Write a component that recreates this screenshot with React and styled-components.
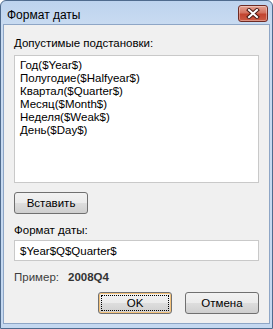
import styled, { createGlobalStyle } from "styled-components";

const Global = createGlobalStyle`
  html, body {
    margin: 0;
    padding: 0;
    background: #ffffff;
  }
  body {
    font-family: "Liberation Sans", Arial, sans-serif;
  }
`;

const Window = styled.div`
  width: 273px;
  height: 329px;
  box-sizing: border-box;
  display: flex;
  flex-direction: column;
  border: 1px solid #4f6b8e;
  border-radius: 6px 6px 0 0;
  background: linear-gradient(#bdd3ee 0px, #c9dbf1 24px, #c4d8f0 100%);
  overflow: hidden;
`;

const TitleBar = styled.div`
  height: 23px;
  display: flex;
  align-items: center;
  padding: 0 4px 0 6px;
  flex-shrink: 0;
`;

const Title = styled.div`
  font-size: 12px;
  color: #000;
  padding-top: 4px;
`;

const CloseButton = styled.div`
  margin-left: auto;
  margin-top: 2px;
  width: 30px;
  height: 17px;
  box-sizing: border-box;
  border: 1px solid #6e2b24;
  border-radius: 3px;
  background: linear-gradient(#e4a393 0%, #d4725f 45%, #c2442f 55%, #cc5b44 100%);
  display: flex;
  align-items: center;
  justify-content: center;
  box-shadow: inset 0 0 0 1px rgba(255, 255, 255, 0.35);
`;

const Client = styled.div`
  flex: 1;
  margin: 0 2px 4px 2px;
  background: #f0f0f0;
  border: 1px solid #8ea6c6;
  padding: 11px 10px 0 10px;
  display: flex;
  flex-direction: column;
  font-size: 11.5px;
  color: #000;
`;

const Label = styled.div`
  line-height: 15px;
  margin-top: ${(p) => p.$top || 0}px;
`;

const ListBox = styled.div`
  margin-top: 4px;
  height: 128px;
  box-sizing: border-box;
  background: #fff;
  border: 1px solid #c9c9c9;
  padding: 3px 5px;
`;

const ListItem = styled.div`
  line-height: 13px;
`;

const Button = styled.div`
  width: 74px;
  height: 22px;
  box-sizing: border-box;
  border: 1px solid #707070;
  border-radius: 3px;
  background: linear-gradient(#f2f2f2 0%, #ebebeb 50%, #dddddd 51%, #cfcfcf 100%);
  display: flex;
  align-items: center;
  justify-content: center;
  position: relative;
  ${(p) =>
    p.$focused &&
    `
    box-shadow: inset 0 0 0 1px #f3c27b;
    &::after {
      content: "";
      position: absolute;
      inset: 2px;
      border: 1px dotted #000;
    }
  `}
`;

const InsertButton = styled(Button)`
  margin-top: 9px;
`;

const TextInput = styled.div`
  margin-top: 2px;
  height: 21px;
  box-sizing: border-box;
  background: #fff;
  border: 1px solid #c9c9c9;
  padding: 0 5px;
  display: flex;
  align-items: center;
`;

const ExampleRow = styled.div`
  margin-top: 9px;
  display: flex;
  gap: 9px;
  line-height: 14px;
`;

const ExampleLabel = styled.span`
  color: #3d3d3d;
`;

const ExampleValue = styled.span`
  font-weight: bold;
  color: #333;
`;

const ButtonRow = styled.div`
  margin-top: 8px;
  display: flex;
  justify-content: flex-end;
  gap: 13px;
`;

const items = [
  "Год($Year$)",
  "Полугодие($Halfyear$)",
  "Квартал($Quarter$)",
  "Месяц($Month$)",
  "Неделя($Weak$)",
  "День($Day$)",
];

export default function App() {
  return (
    <>
      <Global />
      <Window>
        <TitleBar>
          <Title>Формат даты</Title>
          <CloseButton>
            <svg width="14" height="11" viewBox="0 0 14 11">
              <path d="M3 2 L11 9 M11 2 L3 9" stroke="#4a1a14" strokeWidth="4" strokeLinecap="square" />
              <path d="M3 2 L11 9 M11 2 L3 9" stroke="#ffffff" strokeWidth="2" strokeLinecap="square" />
            </svg>
          </CloseButton>
        </TitleBar>
        <Client>
          <Label>Допустимые подстановки:</Label>
          <ListBox>
            {items.map((t) => (
              <ListItem key={t}>{t}</ListItem>
            ))}
          </ListBox>
          <InsertButton>Вставить</InsertButton>
          <Label $top={9}>Формат даты:</Label>
          <TextInput>$Year$Q$Quarter$</TextInput>
          <ExampleRow>
            <ExampleLabel>Пример:</ExampleLabel>
            <ExampleValue>2008Q4</ExampleValue>
          </ExampleRow>
          <ButtonRow>
            <Button $focused>OK</Button>
            <Button>Отмена</Button>
          </ButtonRow>
        </Client>
      </Window>
    </>
  );
}
